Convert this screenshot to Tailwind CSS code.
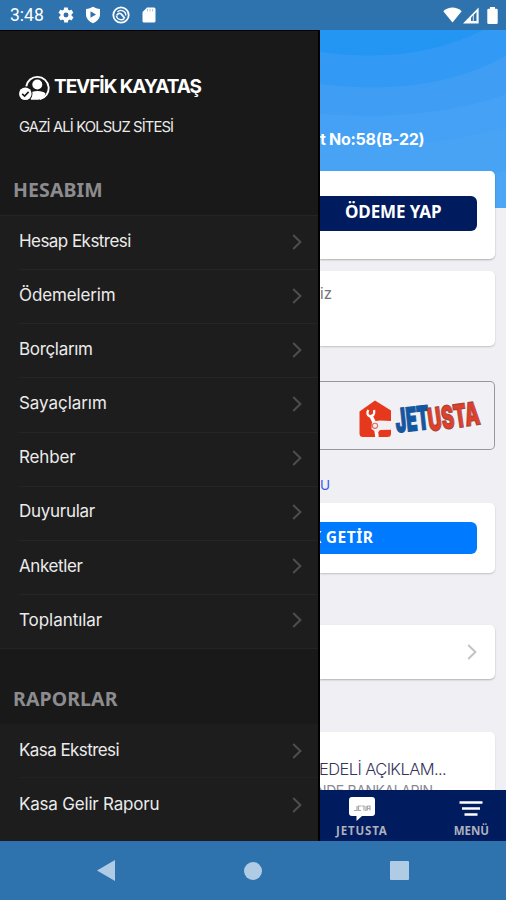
<!DOCTYPE html>
<html lang="tr">
<head>
<meta charset="utf-8">
<title>Menü</title>
<script src="https://cdn.jsdelivr.net/npm/@tailwindcss/browser@4"></script>
</head>
<body class="w-[506px] h-[900px] overflow-hidden flex flex-col bg-[#efeff4] font-['Inter',sans-serif]">
<svg class="hidden"><symbol id="chev" viewBox="0 0 10 16"><path d="M1.2 1 L8.4 8 L1.2 15" fill="none" stroke="currentColor" stroke-width="2"/></symbol></svg>

<header class="h-[30px] shrink-0 bg-[#2e73ae] flex items-center text-white">
  <span class="ml-[10px] w-[48px] whitespace-nowrap font-['Roboto',sans-serif] text-[17.500px] leading-none pt-[2px]">3:48</span>
  <svg class="size-[18px] -ml-px" viewBox="0 0 24 24" fill="currentColor"><path d="M19.4 13c0-.3.1-.6.1-1s0-.7-.1-1l2.1-1.6c.2-.2.2-.4.1-.6l-2-3.5c-.1-.2-.4-.3-.6-.2l-2.500 1c-.5-.4-1.100-.7-1.700-1l-.4-2.600c0-.2-.2-.4-.5-.4h-4c-.2 0-.5.2-.5.4l-.4 2.600c-.6.300-1.200.600-1.700 1l-2.500-1c-.2-.1-.5 0-.6.2l-2 3.500c-.1.200-.1.500.1.600L4.600 11c0 .300-.1.700-.1 1s0 .700.1 1l-2.100 1.600c-.2.200-.2.400-.1.600l2 3.500c.1.200.4.300.6.200l2.500-1c.5.400 1.100.700 1.700 1l.4 2.600c0 .200.2.400.5.400h4c.2 0 .5-.2.5-.4l.4-2.600c.6-.3 1.200-.6 1.700-1l2.500 1c.2.100.5 0 .6-.2l2-3.500c.1-.2.1-.5-.1-.6L19.400 13zM12 15.300a3.300 3.300 0 1 1 0-6.600 3.300 3.300 0 0 1 0 6.600z"/></svg>
  <svg class="w-[16px] h-[18px] ml-[10px]" viewBox="0 0 16 18"><path d="M8 .8c2 1.300 4.500 2 7 2.100v5.600c0 4-3 7-7 8.700-4-1.700-7-4.700-7-8.700V2.900C3.500 2.800 6 2.100 8 .8z" fill="currentColor"/><path d="M5.500 5.200 L11 8.500 L5.500 11.800z" fill="#2e73ae"/></svg>
  <svg class="size-[18px] ml-[11px]" viewBox="0 0 18 18" fill="none" stroke="currentColor"><circle cx="9" cy="9" r="7.700" stroke-width="1.800"/><path d="M12.300 12.500A4.700 4.700 0 0 1 4.400 9.500M5.500 6A4.700 4.700 0 0 1 13.700 9.500" stroke-width="1.400"/><path d="M4.800 9.200c2-2.600 4-2 5.200-.3l2.800 3.400" stroke-width="1.700"/></svg>
  <svg class="w-[14px] h-[16px] ml-[12px]" viewBox="0 0 14 16"><path d="M5 .5h7a1.500 1.500 0 0 1 1.500 1.500v12a1.500 1.500 0 0 1-1.500 1.500H2A1.500 1.500 0 0 1 .5 14V5z" fill="currentColor"/><path d="M5.500 2v2.500M8 2v2.500M10.500 2v2.500" stroke="#a9c7e0" stroke-width="1"/></svg>
  <span class="flex-1"></span>
  <svg class="w-[19px] h-[16px]" viewBox="0 0 19 16" fill="currentColor"><path d="M.3 4.200C5.500-.6 13.500-.6 18.700 4.200L9.500 15.600z"/></svg>
  <svg class="w-[16px] h-[17px] ml-px" viewBox="0 0 16 17"><path d="M0 16.500 15.600.5v16z" fill="currentColor"/><path d="M8 14 V10.500 L13.500 5 V14z" fill="#2e73ae"/><path d="M10.300 8v6" stroke="#fff" stroke-width=".8"/></svg>
  <svg class="w-[11px] h-[17px] ml-[8px] mr-[8px]" viewBox="0 0 11 17" fill="currentColor"><path d="M3 0h5v1.700h1.500q1.200 0 1.200 1.200v12.800q0 1.200-1.200 1.200h-8q-1.200 0-1.200-1.200V2.900q0-1.200 1.200-1.200H3z"/></svg>
</header>

<main class="h-[811px] shrink-0 flex overflow-hidden">
  <aside class="w-[320px] shrink-0 bg-[#191919] border-r-2 border-black border-t flex flex-col overflow-hidden text-[#ebebeb]">
    <div class="h-[184px] shrink-0 flex flex-col">
      <div class="flex items-center mt-[43px] ml-[18px] h-[28px]">
        <svg class="w-[32px] h-[28px] shrink-0" viewBox="0 0 32 28"><path d="M8.200 12.500A11.300 11.300 0 1 1 22 25.200" fill="none" stroke="#fff" stroke-width="1.900"/><circle cx="19.300" cy="10.500" r="5" fill="#fff"/><path d="M11.500 19.500c2-3.500 14-3.500 16 0-1 3.500-3.500 6.200-7.500 6.200h-7z" fill="#fff"/><circle cx="7.300" cy="19.700" r="7.200" fill="#191919"/><circle cx="7.300" cy="19.700" r="6.300" fill="#fff"/><path d="M4.200 19.800l2.400 2.300 4-4.200" fill="none" stroke="#191919" stroke-width="1.600"/></svg>
        <span class="ml-[4px] pb-[3px] whitespace-nowrap text-[19px] leading-none font-bold tracking-[-1.050px] text-white">TEVFİK KAYATAŞ</span>
      </div>
      <div class="mt-[16px] ml-[19px] whitespace-nowrap text-[14.800px] leading-[18px] tracking-[-0.88px]">GAZİ ALİ KOLSUZ SİTESİ</div>
      <div class="mt-[40px] ml-[13px] leading-[28px] text-[19.500px] font-bold text-[#8c8c8f] font-['Noto_Sans',sans-serif] whitespace-nowrap tracking-[0.1px]">HESABIM</div>
    </div>
    <nav class="shrink-0 bg-[#1d1d1d] border-y border-[#242424] pl-[19px] h-[434px] flex flex-col text-[17px] divide-y divide-[#252525]">
      <a class="flex-1 flex items-center justify-between pr-[16px] pb-[2px]"><span class="tracking-[-0.55px]">Hesap Ekstresi</span><svg class="w-[10px] h-[16px] text-[#4e4e4e]"><use href="#chev"/></svg></a>
      <a class="flex-1 flex items-center justify-between pr-[16px] pb-[2px]"><span class="tracking-[-0.12px]">Ödemelerim</span><svg class="w-[10px] h-[16px] text-[#4e4e4e]"><use href="#chev"/></svg></a>
      <a class="flex-1 flex items-center justify-between pr-[16px] pb-[2px]"><span class="tracking-[-0.32px]">Borçlarım</span><svg class="w-[10px] h-[16px] text-[#4e4e4e]"><use href="#chev"/></svg></a>
      <a class="flex-1 flex items-center justify-between pr-[16px] pb-[2px]"><span class="tracking-[-0.05px]">Sayaçlarım</span><svg class="w-[10px] h-[16px] text-[#4e4e4e]"><use href="#chev"/></svg></a>
      <a class="flex-1 flex items-center justify-between pr-[16px] pb-[2px]"><span class="tracking-[-0.15px]">Rehber</span><svg class="w-[10px] h-[16px] text-[#4e4e4e]"><use href="#chev"/></svg></a>
      <a class="flex-1 flex items-center justify-between pr-[16px] pb-[2px]"><span class="tracking-[-0.28px]">Duyurular</span><svg class="w-[10px] h-[16px] text-[#4e4e4e]"><use href="#chev"/></svg></a>
      <a class="flex-1 flex items-center justify-between pr-[16px] pb-[2px]"><span class="tracking-[-0.4px]">Anketler</span><svg class="w-[10px] h-[16px] text-[#4e4e4e]"><use href="#chev"/></svg></a>
      <a class="flex-1 flex items-center justify-between pr-[16px] pb-[2px]"><span class="tracking-[-0.05px]">Toplantılar</span><svg class="w-[10px] h-[16px] text-[#4e4e4e]"><use href="#chev"/></svg></a>
    </nav>
    <div class="h-[75px] shrink-0 pt-[36px] pl-[13px] leading-[28px] text-[19.500px] font-bold text-[#8c8c8f] font-['Noto_Sans',sans-serif] whitespace-nowrap tracking-[0.1px]">RAPORLAR</div>
    <nav class="flex-1 bg-[#1d1d1d] pl-[19px] flex flex-col text-[17px] divide-y divide-[#222]">
      <a class="h-[54px] flex items-center justify-between pr-[16px]"><span class="tracking-[-0.57px]">Kasa Ekstresi</span><svg class="w-[10px] h-[16px] text-[#4e4e4e]"><use href="#chev"/></svg></a>
      <a class="h-[54px] flex items-center justify-between pr-[16px]"><span class="pb-px tracking-[-0.2px]">Kasa Gelir Raporu</span><svg class="w-[10px] h-[16px] text-[#4e4e4e]"><use href="#chev"/></svg></a>
    </nav>
  </aside>

  <section class="w-[186px] shrink-0 flex flex-col overflow-hidden">
    <div class="h-[760px] shrink-0 overflow-hidden relative flex flex-col pr-[11px]">
      <svg class="absolute left-0 top-0 w-[186px] h-[178px]" viewBox="0 0 186 178"><rect width="186" height="178" fill="#4ca5f5"/><path d="M0 0H186V140Q110 172 0 152z" fill="#49a3f5"/><path d="M0 0H186V97Q100 122 0 113z" fill="#44a1f5"/><path d="M0 0H186V64Q110 92 0 84z" fill="#3f9ef4"/><path d="M0 0H186V26Q110 68 0 54z" fill="#329af5"/><path d="M0 0H163Q95 35 0 22z" fill="#2396f4"/></svg>
      <div class="relative h-[141px] shrink-0 pt-[98px] whitespace-nowrap font-bold text-white text-[16px] leading-[22px] tracking-[-0.28px]">t No:58(B-22)</div>
      <div class="relative h-[88px] shrink-0 bg-white rounded-r-[5px] shadow-[0_1px_2px_#0004] pt-[25px] pr-[18px]">
        <div class="h-[35px] bg-[#001b5e] rounded-r-[6px] flex items-center pl-[25px] pb-[3px] whitespace-nowrap text-white font-bold text-[17px] tracking-[-0.1px] font-['Noto_Sans',sans-serif]">ÖDEME YAP</div>
      </div>
      <div class="mt-[12px] h-[75px] shrink-0 bg-white rounded-r-[5px] shadow-[0_1px_2px_#0003] pt-[13px] text-[15px] leading-[20px] text-[#74747a]">iz</div>
      <div class="mt-[35px] h-[69px] shrink-0 rounded-r-[5px] border border-l-0 border-[#98989c] bg-[#f1f1f5]">
        <svg class="w-[174px] h-[67px]" viewBox="0 0 174 67">
          <path d="M39.500 29.500 55 18.500 71 28.500V39H61q-4.500 0-4.500 4.200t4.500 4.200H71V51.500q0 3.500-3.500 3.500H43Q39.500 55 39.500 51.500z" fill="#e5381c"/>
          <path d="M50.500 33 55.500 43 57 55" fill="none" stroke="#fff" stroke-width="3.600"/>
          <path d="M48.300 28q-2.500 4.500 1.800 6.500 4.900-.5 4-6.500" fill="none" stroke="#fff" stroke-width="2.300"/>
          <path d="M52 39.500 60 38.500 71 39V47.400L60 48 57.500 51 51.500 47z" fill="#f3eef0"/>
          <circle cx="55" cy="43.800" r="2.600" fill="none" stroke="#d9705f" stroke-width="1.100"/>
          <g font-family="Inter, sans-serif" font-weight="900" stroke-width="1.200">
            <text transform="translate(76.500 50.500) rotate(-6)" font-size="33" textLength="34" lengthAdjust="spacingAndGlyphs" fill="#1556a0" stroke="#1556a0">JET</text>
            <text transform="translate(109.500 49.500) rotate(-8)" font-size="32" textLength="52" lengthAdjust="spacingAndGlyphs" fill="#e0402a" stroke="#a5443b">USTA</text>
          </g>
        </svg>
      </div>
      <div class="h-[53px] shrink-0 pt-[25px] leading-[20px] text-[13.500px] text-[#3358ee]">U</div>
      <div class="h-[70px] shrink-0 bg-white rounded-r-[5px] shadow-[0_1px_2px_#0003] pt-[19px] pr-[18px]">
        <div class="h-[32px] bg-[#007aff] rounded-r-[6px] flex items-center overflow-hidden whitespace-nowrap pb-px text-white font-bold text-[15.500px] tracking-[0.5px] font-['Noto_Sans',sans-serif]"><span class="-ml-[9px] mr-[4px]">K</span>GETİR</div>
      </div>
      <div class="mt-[52px] h-[54px] shrink-0 bg-white rounded-r-[5px] shadow-[0_1px_2px_#0004] flex items-center justify-end pr-[18px] text-[#c3c3c7]"><svg class="w-[10px] h-[16px]"><use href="#chev"/></svg></div>
      <div class="mt-[53px] h-[90px] shrink-0 bg-white rounded-r-[5px] shadow-[0_1px_2px_#0002] pt-[26px] whitespace-nowrap overflow-hidden">
        <div class="h-[22px] leading-[22px] text-[16.500px] tracking-[-0.6px] font-light text-[#35355c]"><span class="-ml-px">EDELİ AÇIKLAM...</span></div>
        <div class="leading-[22px] text-[14px] tracking-[-0.4px] text-[#8a8a92]"><span class="-ml-[4px]">NDE BANKALARIN</span></div>
      </div>
    </div>
    <footer class="h-[51px] shrink-0 bg-[#001b5e] flex justify-between pl-[16px] pr-[17px] font-['Noto_Sans',sans-serif] font-bold text-[11.500px] text-[#aeb0bd]">
      <div class="flex flex-col items-center">
        <svg class="w-[26px] h-[25px] mt-[7px]" viewBox="0 0 26 25"><path d="M3 0H23Q26 0 26 3V16Q26 19 23 19H13L7.500 24V19H3Q0 19 0 16V3Q0 0 3 0z" fill="#fff"/><path d="M8 9v4.500H5M12 9H9.500v4.500H12M12.500 9h2.500v4.500M17 9v4.500h-1M18.500 13.500V9h2.500v4.500M18.500 11.500H21" fill="none" stroke="#aaa" stroke-width="1.200"/></svg>
        <span class="leading-[16px] mt-px tracking-[0.85px]">JETUSTA</span>
      </div>
      <div class="flex flex-col items-center">
        <svg class="w-[24px] h-[25px] mt-[7px]" viewBox="0 0 24 25"><path d="M.5 5.500H23.500M3 11.500H21M5.500 17.500H18.500" stroke="#fff" stroke-width="2.300"/></svg>
        <span class="leading-[16px] mt-px">MENÜ</span>
      </div>
    </footer>
  </section>
</main>

<footer class="h-[59px] shrink-0 bg-[#2e73ae] text-[#b0cce5] flex items-center justify-between pl-[97px] pr-[97px]">
  <svg class="w-[18px] h-[21px]" viewBox="0 0 18 21" fill="currentColor"><path d="M0 10.500 18 0V21z"/></svg>
  <div class="size-[18px] rounded-full bg-[#b0cce5]"></div>
  <div class="size-[19px] rounded-[1px] bg-[#b0cce5]"></div>
</footer>
</body>
</html>
